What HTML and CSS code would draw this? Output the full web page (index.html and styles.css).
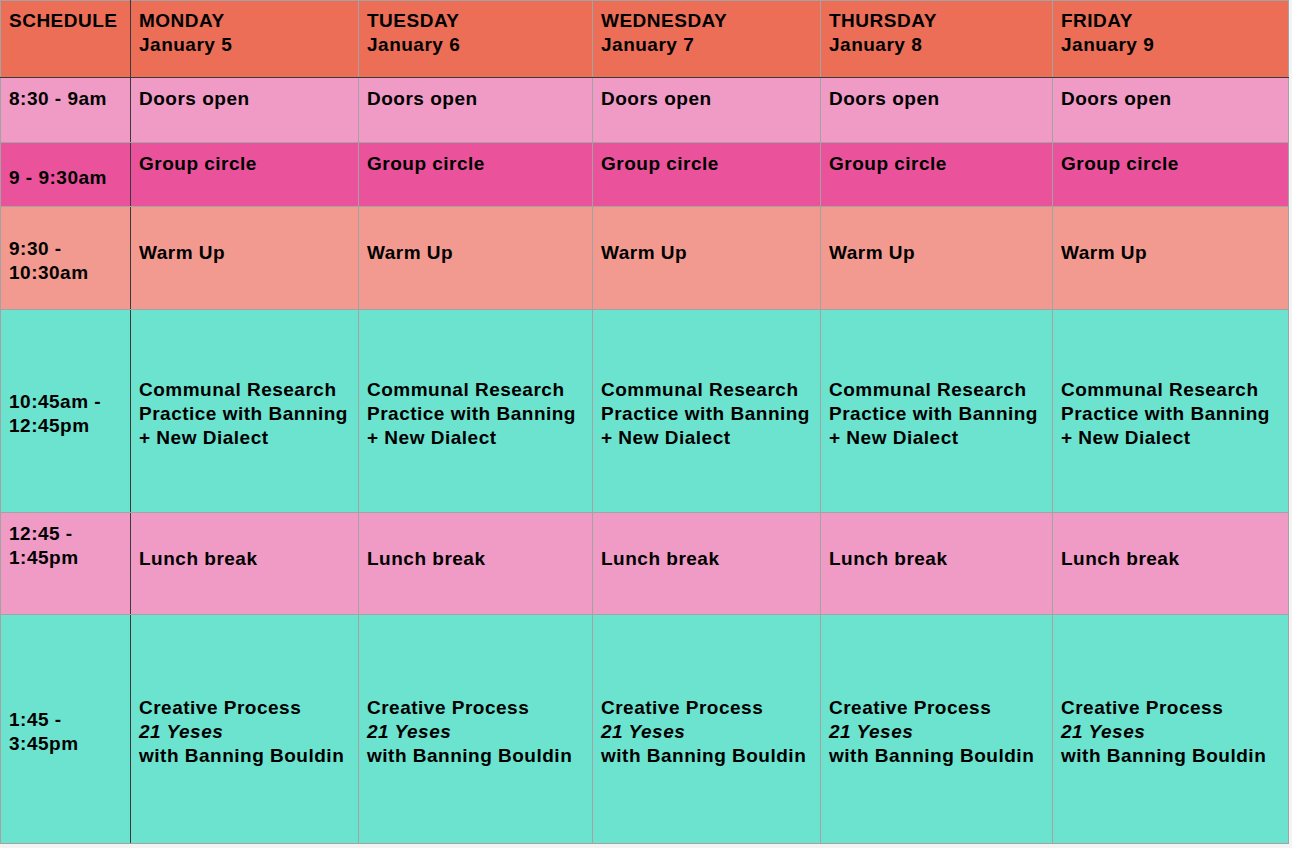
FILE: index.html
```html
<!DOCTYPE html>
<html>
<head>
<meta charset="utf-8">
<link rel="stylesheet" href="styles.css">
</head>
<body>
<table class="schedule">
  <colgroup>
    <col class="c-time">
    <col class="c-mon">
    <col class="c-tue">
    <col class="c-wed">
    <col class="c-thu">
    <col class="c-fri">
  </colgroup>
  <thead>
    <tr class="r-head">
      <th class="time">SCHEDULE</th>
      <th>MONDAY<br>January 5</th>
      <th>TUESDAY<br>January 6</th>
      <th>WEDNESDAY<br>January 7</th>
      <th>THURSDAY<br>January 8</th>
      <th>FRIDAY<br>January 9</th>
    </tr>
  </thead>
  <tbody>
    <tr class="r-doors">
      <td class="time top">8:30 - 9am</td>
      <td class="top">Doors open</td>
      <td class="top">Doors open</td>
      <td class="top">Doors open</td>
      <td class="top">Doors open</td>
      <td class="top">Doors open</td>
    </tr>
    <tr class="r-circle">
      <td class="time mid">9 - 9:30am</td>
      <td class="top">Group circle</td>
      <td class="top">Group circle</td>
      <td class="top">Group circle</td>
      <td class="top">Group circle</td>
      <td class="top">Group circle</td>
    </tr>
    <tr class="r-warm">
      <td class="time mid">9:30 -<br>10:30am</td>
      <td class="mid raise">Warm Up</td>
      <td class="mid raise">Warm Up</td>
      <td class="mid raise">Warm Up</td>
      <td class="mid raise">Warm Up</td>
      <td class="mid raise">Warm Up</td>
    </tr>
    <tr class="r-research">
      <td class="time mid">10:45am -<br>12:45pm</td>
      <td class="mid">Communal Research<br>Practice with Banning<br>+ New Dialect</td>
      <td class="mid">Communal Research<br>Practice with Banning<br>+ New Dialect</td>
      <td class="mid">Communal Research<br>Practice with Banning<br>+ New Dialect</td>
      <td class="mid">Communal Research<br>Practice with Banning<br>+ New Dialect</td>
      <td class="mid">Communal Research<br>Practice with Banning<br>+ New Dialect</td>
    </tr>
    <tr class="r-lunch">
      <td class="time top">12:45 -<br>1:45pm</td>
      <td class="mid raise">Lunch break</td>
      <td class="mid raise">Lunch break</td>
      <td class="mid raise">Lunch break</td>
      <td class="mid raise">Lunch break</td>
      <td class="mid raise">Lunch break</td>
    </tr>
    <tr class="r-creative">
      <td class="time mid">1:45 -<br>3:45pm</td>
      <td class="mid">Creative Process<br><em>21 Yeses</em><br>with Banning Bouldin</td>
      <td class="mid">Creative Process<br><em>21 Yeses</em><br>with Banning Bouldin</td>
      <td class="mid">Creative Process<br><em>21 Yeses</em><br>with Banning Bouldin</td>
      <td class="mid">Creative Process<br><em>21 Yeses</em><br>with Banning Bouldin</td>
      <td class="mid">Creative Process<br><em>21 Yeses</em><br>with Banning Bouldin</td>
    </tr>
  </tbody>
</table>
</body>
</html>
```
FILE: styles.css
```css
html, body {
  margin: 0;
  padding: 0;
  background: #f4f4f4;
}

.schedule {
  border-collapse: collapse;
  table-layout: fixed;
  width: 1289px;
  font-family: "Liberation Sans", Arial, Helvetica, sans-serif;
  font-size: 19px;
  letter-spacing: 0.5px;
  font-weight: bold;
  line-height: 24px;
  color: #000;
}

.c-time { width: 130px; }
.c-mon { width: 228px; }
.c-tue { width: 234px; }
.c-wed { width: 228px; }
.c-thu { width: 232px; }
.c-fri { width: 236px; }

.schedule th,
.schedule td {
  border: 1px solid #a3a3a3;
  padding: 9px 4px 9px 8px;
  text-align: left;
  font-weight: bold;
  vertical-align: top;
  white-space: nowrap;
}

.schedule .time {
  border-right: 1px solid #3a3a3a;
}

.schedule thead th {
  border-bottom: 1px solid #3a3a3a;
}

.schedule td.top { vertical-align: top; }
.schedule td.mid {
  vertical-align: middle;
  padding-top: 12px;
  padding-bottom: 6px;
}
.schedule td.mid.raise {
  padding-top: 4px;
  padding-bottom: 14px;
}

.schedule em {
  font-style: italic;
}

.r-head { height: 77px; }
.r-head th { background: #ec6e57; padding-top: 8px; }

.r-doors { height: 65px; }
.r-doors td { background: #f09ac6; }

.r-circle { height: 64px; }
.r-circle td { background: #ea529c; }

.r-warm { height: 103px; }
.r-warm td { background: #f29a8f; }

.r-research { height: 203px; }
.r-research td { background: #6be3cf; }

.r-lunch { height: 102px; }
.r-lunch td { background: #f09ac6; }

.r-creative { height: 229px; }
.r-creative td { background: #6be3cf; }
```
